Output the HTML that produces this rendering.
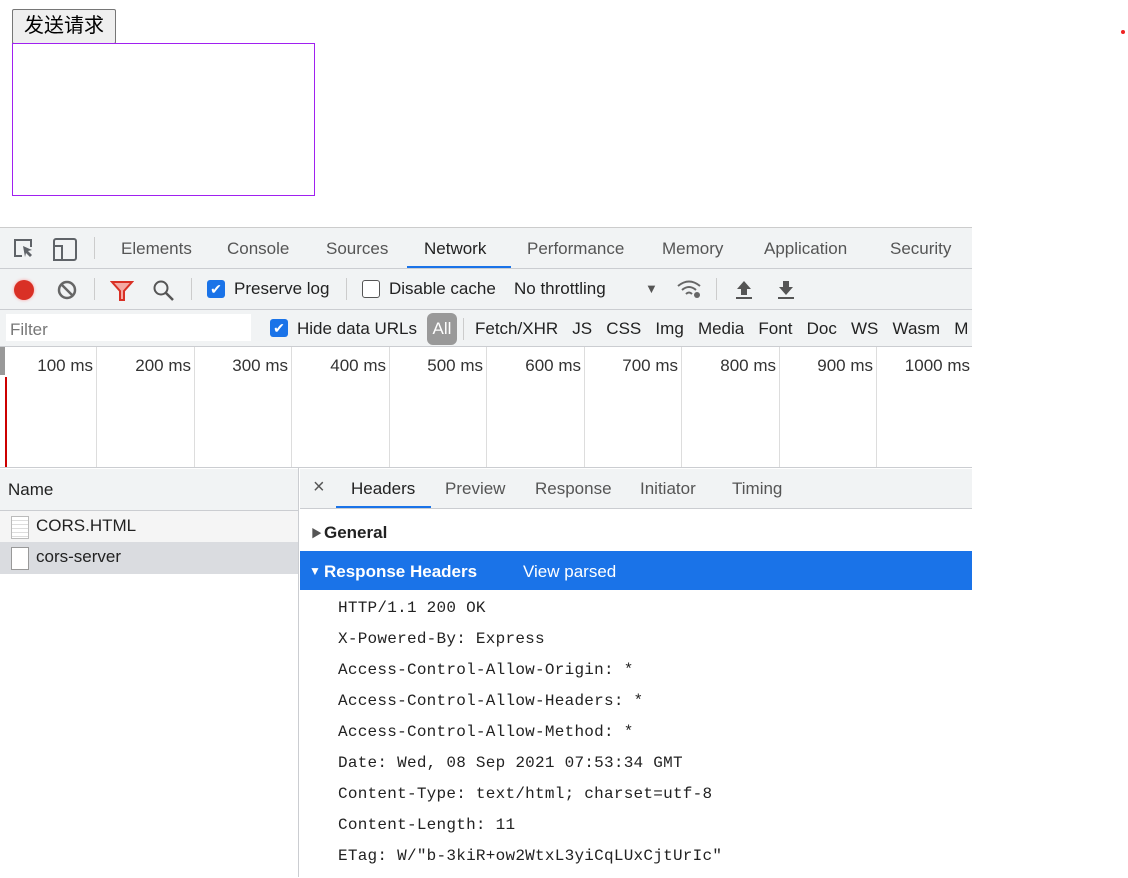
<!DOCTYPE html><html><head><style>
body{margin:0;width:1128px;height:877px;position:relative;background:#fff;font-family:"Liberation Sans","Noto Sans CJK SC",sans-serif;overflow:hidden}
.a{position:absolute;white-space:nowrap}
.t{font-size:17px;color:#555}
.m{font-family:"Liberation Mono",monospace;font-size:16px;letter-spacing:0.25px;color:#222;left:338px}
</style></head><body>
<div class="a" style="left:12px;top:9px;width:102px;height:33px;border:1px solid #767676;background:#efefef;border-radius:2px;font-size:20px;line-height:33px;text-align:center">发送请求</div>
<div class="a" style="left:12px;top:43px;width:301px;height:151px;border:1px solid #a020f0"></div>
<div class="a" style="left:1121px;top:30px;width:4px;height:4px;border-radius:2px;background:#e22"></div>

<div class="a" style="left:0;top:227px;width:972px;height:650px;background:#fff;border-top:1px solid #ccc"></div>
<div class="a" style="left:0;top:228px;width:972px;height:40px;background:#f1f3f4;border-bottom:1px solid #cbcdd1"></div>
<svg class="a" style="left:12px;top:236px" width="70" height="26"><path d="M10 20H3V4h16v7" fill="none" stroke="#5f6368" stroke-width="2"/><path d="M11 10l9 4-4 1 4 4-2 2-4-4-1 4z" fill="#5f6368"/><rect x="42" y="3" width="22" height="21" rx="2" fill="none" stroke="#5f6368" stroke-width="2"/><rect x="42" y="10" width="8" height="14" fill="#f1f3f4" stroke="#5f6368" stroke-width="2"/></svg>
<div class="a" style="left:94px;top:237px;width:1px;height:22px;background:#ccc"></div>
<div class="a t" style="left:121px;top:239px">Elements</div>
<div class="a t" style="left:227px;top:239px">Console</div>
<div class="a t" style="left:326px;top:239px">Sources</div>
<div class="a t" style="left:424px;top:239px;color:#222">Network</div>
<div class="a" style="left:407px;top:266px;width:104px;height:2px;background:#1a73e8"></div>
<div class="a t" style="left:527px;top:239px">Performance</div>
<div class="a t" style="left:662px;top:239px">Memory</div>
<div class="a t" style="left:764px;top:239px">Application</div>
<div class="a t" style="left:890px;top:239px">Security</div>

<div class="a" style="left:0;top:269px;width:972px;height:40px;background:#f1f3f4;border-bottom:1px solid #cbcdd1"></div>
<div class="a" style="left:14px;top:280px;width:20px;height:20px;border-radius:10px;background:#d93025;box-shadow:0 0 3px #f99"></div>
<svg class="a" style="left:56px;top:279px" width="22" height="22"><circle cx="11" cy="11" r="8" fill="none" stroke="#666" stroke-width="2.5"/><path d="M5 5l12 12" stroke="#666" stroke-width="2.5"/></svg>
<div class="a" style="left:94px;top:278px;width:1px;height:22px;background:#ccc"></div>
<svg class="a" style="left:110px;top:280px" width="24" height="22"><path d="M2 2h20l-8 9v9h-4v-9z" fill="#f4a9a3" stroke="#d93025" stroke-width="2"/></svg>
<svg class="a" style="left:152px;top:279px" width="24" height="24"><circle cx="9" cy="9" r="6.5" fill="none" stroke="#555" stroke-width="2"/><path d="M14 14l7 7" stroke="#555" stroke-width="2.5"/></svg>
<div class="a" style="left:191px;top:278px;width:1px;height:22px;background:#ccc"></div>
<div class="a" style="left:207px;top:280px;width:18px;height:18px;border-radius:3px;background:#1a73e8;color:#fff;font-size:14px;line-height:18px;text-align:center">✔</div>
<div class="a t" style="left:234px;top:279px;color:#222">Preserve log</div>
<div class="a" style="left:346px;top:278px;width:1px;height:22px;background:#ccc"></div>
<div class="a" style="left:362px;top:280px;width:16px;height:16px;border-radius:3px;border:1px solid #555;background:#fff"></div>
<div class="a t" style="left:389px;top:279px;color:#222">Disable cache</div>
<div class="a t" style="left:514px;top:279px;color:#222">No throttling</div>
<div class="a" style="left:645px;top:281px;font-size:13px;color:#555">▼</div>
<svg class="a" style="left:676px;top:278px" width="28" height="22"><path d="M2 8q11-9 22 0M6 12q7-6 14 0M10 16q3-3 6 0" fill="none" stroke="#666" stroke-width="2"/><circle cx="21" cy="17" r="3" fill="#666"/></svg>
<div class="a" style="left:716px;top:278px;width:1px;height:22px;background:#ccc"></div>
<svg class="a" style="left:734px;top:279px" width="60" height="22"><path d="M10 2l-7 8h4v6h6v-6h4z" fill="#555"/><rect x="2" y="18" width="16" height="2" fill="#555"/><path d="M52 16l-7-8h4V2h6v6h4z" fill="#555"/><rect x="44" y="18" width="16" height="2" fill="#555"/></svg>

<div class="a" style="left:0;top:310px;width:972px;height:36px;background:#f1f3f4;border-bottom:1px solid #cbcdd1;overflow:hidden">
<div class="a" style="left:6px;top:4px;width:245px;height:27px;background:#fff"></div>
<div class="a t" style="left:10px;top:10px;color:#777">Filter</div>
<div class="a" style="left:270px;top:9px;width:18px;height:18px;border-radius:3px;background:#1a73e8;color:#fff;font-size:14px;line-height:18px;text-align:center">✔</div>
<div class="a t" style="left:297px;top:9px;color:#222">Hide data URLs</div>
<div class="a" style="left:427px;top:3px;width:30px;height:32px;border-radius:6px;background:#999;color:#fff;font-size:17px;line-height:32px;text-align:center">All</div>
<div class="a" style="left:463px;top:8px;width:1px;height:22px;background:#ccc"></div>
<div class="a t" style="left:475px;top:9px;color:#222">Fetch/XHR&nbsp;&nbsp; JS&nbsp;&nbsp; CSS&nbsp;&nbsp; Img&nbsp;&nbsp; Media&nbsp;&nbsp; Font&nbsp;&nbsp; Doc&nbsp;&nbsp; WS&nbsp;&nbsp; Wasm&nbsp;&nbsp; M</div>
</div>

<div class="a" style="left:0;top:347px;width:5px;height:28px;background:#999"></div>
<div class="a" style="left:5px;top:377px;width:2px;height:90px;background:#c00"></div>
<div class="a" style="left:0;top:467px;width:972px;height:1px;background:#cbcdd1"></div>
<div class="a" style="left:96px;top:347px;width:1px;height:120px;background:#ddd"></div>
<div class="a" style="left:194px;top:347px;width:1px;height:120px;background:#ddd"></div>
<div class="a" style="left:291px;top:347px;width:1px;height:120px;background:#ddd"></div>
<div class="a" style="left:389px;top:347px;width:1px;height:120px;background:#ddd"></div>
<div class="a" style="left:486px;top:347px;width:1px;height:120px;background:#ddd"></div>
<div class="a" style="left:584px;top:347px;width:1px;height:120px;background:#ddd"></div>
<div class="a" style="left:681px;top:347px;width:1px;height:120px;background:#ddd"></div>
<div class="a" style="left:779px;top:347px;width:1px;height:120px;background:#ddd"></div>
<div class="a" style="left:876px;top:347px;width:1px;height:120px;background:#ddd"></div>
<div class="a" style="top:356px;left:0;width:972px;font-size:17px;color:#333">
<span class="a" style="right:879px">100 ms</span><span class="a" style="right:781px">200 ms</span><span class="a" style="right:684px">300 ms</span><span class="a" style="right:586px">400 ms</span><span class="a" style="right:489px">500 ms</span><span class="a" style="right:391px">600 ms</span><span class="a" style="right:294px">700 ms</span><span class="a" style="right:196px">800 ms</span><span class="a" style="right:99px">900 ms</span><span class="a" style="right:2px">1000 ms</span></div>

<div class="a" style="left:0;top:468px;width:298px;height:409px;border-right:1px solid #cbcdd1;background:#fff"></div>
<div class="a" style="left:0;top:469px;width:298px;height:41px;background:#f1f3f4;border-bottom:1px solid #cbcdd1"></div>
<div class="a t" style="left:8px;top:480px;color:#222">Name</div>
<div class="a" style="left:0;top:511px;width:298px;height:31px;background:#f5f5f5"></div>
<div class="a" style="left:11px;top:516px;width:16px;height:21px;border:1px solid #bbb;background:repeating-linear-gradient(#fff 0 3px,#ddd 3px 4px)"></div>
<div class="a t" style="left:36px;top:516px;color:#222">CORS.HTML</div>
<div class="a" style="left:0;top:542px;width:298px;height:32px;background:#dadce0"></div>
<div class="a" style="left:11px;top:547px;width:16px;height:21px;border:1px solid #999;background:#fff"></div>
<div class="a t" style="left:36px;top:547px;color:#222">cors-server</div>

<div class="a" style="left:300px;top:469px;width:672px;height:39px;background:#f1f3f4;border-bottom:1px solid #cbcdd1"></div>
<div class="a" style="left:313px;top:476px;font-size:20px;color:#555">×</div>
<div class="a t" style="left:351px;top:479px;color:#222">Headers</div>
<div class="a" style="left:336px;top:506px;width:95px;height:2px;background:#1a73e8"></div>
<div class="a t" style="left:445px;top:479px">Preview</div>
<div class="a t" style="left:535px;top:479px">Response</div>
<div class="a t" style="left:640px;top:479px">Initiator</div>
<div class="a t" style="left:732px;top:479px">Timing</div>
<div class="a" style="left:311px;top:525px;font-size:11px;color:#555">▶</div>
<div class="a" style="left:324px;top:523px;font-size:17px;font-weight:bold;color:#222">General</div>
<div class="a" style="left:300px;top:551px;width:672px;height:39px;background:#1a73e8"></div>
<div class="a" style="left:309px;top:564px;font-size:12px;color:#fff">▼</div>
<div class="a" style="left:324px;top:562px;font-size:17px;font-weight:bold;color:#fff">Response Headers</div>
<div class="a" style="left:523px;top:562px;font-size:17px;color:#fff">View parsed</div>
<div class="a m" style="top:599px">HTTP/1.1 200 OK</div>
<div class="a m" style="top:630px">X-Powered-By: Express</div>
<div class="a m" style="top:661px">Access-Control-Allow-Origin: *</div>
<div class="a m" style="top:692px">Access-Control-Allow-Headers: *</div>
<div class="a m" style="top:723px">Access-Control-Allow-Method: *</div>
<div class="a m" style="top:754px">Date: Wed, 08 Sep 2021 07:53:34 GMT</div>
<div class="a m" style="top:785px">Content-Type: text/html; charset=utf-8</div>
<div class="a m" style="top:816px">Content-Length: 11</div>
<div class="a m" style="top:847px">ETag: W/"b-3kiR+ow2WtxL3yiCqLUxCjtUrIc"</div>
</body></html>
